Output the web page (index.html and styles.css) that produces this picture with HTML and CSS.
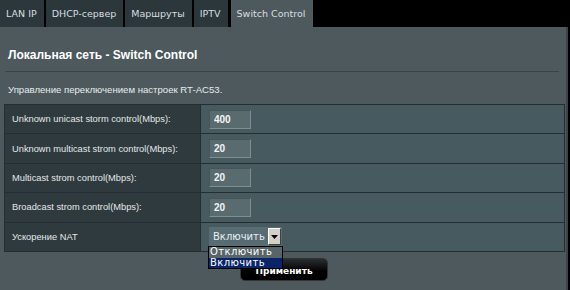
FILE: index.html
```html
<!DOCTYPE html>
<html lang="ru">
<head>
<meta charset="UTF-8" />
<meta name="viewport" content="width=device-width, initial-scale=1" />
<title>Switch Control</title>
<link rel="stylesheet" href="styles.css">
</head>
<body>

<ul class="tabs">
  <li class="tab">LAN IP</li>
  <li class="tab">DHCP-сервер</li>
  <li class="tab">Маршруты</li>
  <li class="tab">IPTV</li>
  <li class="tab active">Switch Control</li>
</ul>

<div class="panel">
  <h2 class="panel-title">Локальная сеть - Switch Control</h2>
  <div class="divider"></div>
  <p class="panel-desc">Управление переключением настроек RT-AC53.</p>

  <table class="form-table">
    <tr>
      <th>Unknown unicast storm control(Mbps):</th>
      <td><input class="text-input" type="text" value="400" /></td>
    </tr>
    <tr>
      <th>Unknown multicast strom control(Mbps):</th>
      <td><input class="text-input" type="text" value="20" /></td>
    </tr>
    <tr>
      <th>Multicast strom control(Mbps):</th>
      <td><input class="text-input" type="text" value="20" /></td>
    </tr>
    <tr>
      <th>Broadcast strom control(Mbps):</th>
      <td><input class="text-input" type="text" value="20" /></td>
    </tr>
    <tr>
      <th>Ускорение NAT</th>
      <td>
        <div class="select">
          <span class="select-value">Включить</span>
          <span class="select-arrow">
            <svg width="7" height="4" viewBox="0 0 7 4"><path d="M0 0H7L3.5 4Z" fill="#000"/></svg>
          </span>
          <ul class="select-list">
            <li>Отключить</li>
            <li class="selected">Включить</li>
          </ul>
        </div>
      </td>
    </tr>
  </table>

  <div class="apply-row">
    <button class="apply-btn">Применить</button>
  </div>
</div>

</body>
</html>
```

FILE: styles.css
```css
body {
  margin: 0;
  background: #000;
  font-family: "Liberation Sans", Arial, sans-serif;
  color: #fff;
}
.tabs {
  list-style: none;
  margin: 0;
  padding: 0;
  display: flex;
  gap: 2px;
  height: 27px;
}
.tab {
  background: #2b373b;
  color: #d8dee0;
  font-family: "DejaVu Sans", Verdana, sans-serif;
  font-size: 9.5px;
  padding: 0 7px 0 6px;
  line-height: 27px;
}
.tab.active {
  background: #4d595d;
  margin-left: 1px;
  padding-right: 8px;
}
.panel {
  background: #4d595d;
  width: 566px;
  height: 263px;
  border-right: 2px solid #3a4548;
  padding-top: 1px;
}
.panel-title {
  margin: 20px 0 0 8px;
  font-size: 12px;
  line-height: 15px;
  font-weight: bold;
  color: #fff;
}
.divider {
  margin: 8px 7px 0 5px;
  height: 1px;
  background: #3a4448;
}
.panel-desc {
  margin: 11px 0 0 8px;
  font-size: 9.6px;
  line-height: 14px;
  color: #e8ecec;
}
.form-table {
  margin: 7px 0 0 4px;
  width: 561px;
  border-collapse: collapse;
  border: 1px solid #262d30;
}
.form-table tr {
  height: 29.4px;
}
.form-table th,
.form-table td {
  border-top: 1px solid #262d30;
  padding: 0;
}
.form-table th {
  width: 188px;
  background: #2f3a3e;
  text-align: left;
  font-weight: normal;
  font-size: 9.3px;
  color: #e4e8e8;
  padding-left: 7px;
  border-right: 1px solid #262d30;
}
.form-table td {
  background: #475a5f;
  padding-left: 8px;
}
.text-input {
  width: 42px;
  height: 19px;
  box-sizing: border-box;
  background: #5a6b70;
  border: 1px solid #7f8e92;
  border-top-color: #46555a;
  border-left-color: #46555a;
  color: #f4f6f6;
  font-family: "Liberation Sans", Arial, sans-serif;
  font-size: 10px;
  font-weight: bold;
  padding: 0 0 0 4px;
  display: block;
}
.select {
  position: relative;
  width: 73px;
  height: 19px;
  background: #576d73;
  display: flex;
  align-items: center;
  justify-content: space-between;
}
.select-value {
  font-family: "DejaVu Sans", Verdana, sans-serif;
  font-size: 10px;
  color: #e8eef0;
  padding-left: 4px;
}
.select-arrow {
  width: 13px;
  height: 17px;
  margin-right: 1px;
  background: #d4d0c8;
  border: 1px solid;
  border-color: #fff #404040 #404040 #fff;
  box-sizing: border-box;
  display: flex;
  align-items: center;
  justify-content: center;
}
.select-list {
  position: absolute;
  top: 19px;
  left: -1px;
  width: 73px;
  margin: 0;
  padding: 0;
  list-style: none;
  border: 1px solid #000;
  z-index: 2;
}
.select-list li {
  background: #576468;
  font-family: "DejaVu Sans", Verdana, sans-serif;
  font-size: 10px;
  line-height: 10.5px;
  letter-spacing: 0.4px;
  color: #fff;
  padding-left: 1px;
}
.select-list li.selected {
  background: #0a246a;
}
.apply-row {
  display: flex;
  justify-content: center;
  padding: 6px 0 0 2px;
}
.apply-btn {
  width: 88px;
  height: 23px;
  border: 1px solid #333;
  border-radius: 5px;
  background: linear-gradient(#2a2e30, #000 60%);
  color: #fff;
  font-family: "DejaVu Sans", Verdana, sans-serif;
  font-size: 9px;
  font-weight: bold;
  padding: 4px 0 0;
  text-shadow: 0 0 2px #000;
}
```
